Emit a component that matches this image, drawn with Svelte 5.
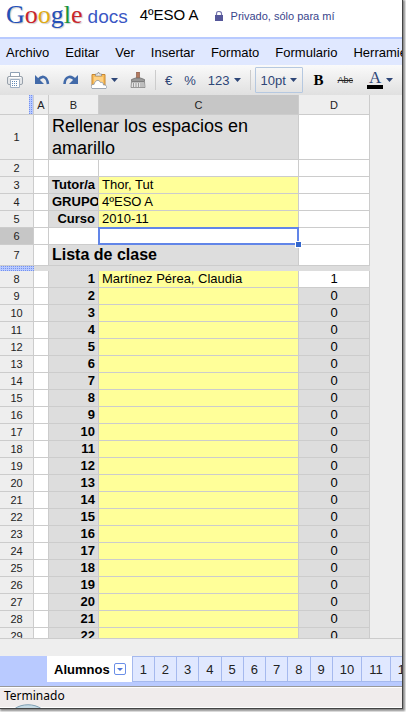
<script>
	const menus = ['Archivo', 'Editar', 'Ver', 'Insertar', 'Formato', 'Formulario', 'Herramientas'];
	const tabs = ['1', '2', '3', '4', '5', '6', '7', '8', '9', '10', '11', '12'];
	const info = [
		{ row: 3, label: 'Tutor/a', value: 'Thor, Tut' },
		{ row: 4, label: 'GRUPO', value: '4ºESO A' },
		{ row: 5, label: 'Curso', value: '2010-11' }
	];
	const students = Array.from({ length: 22 }, (_, i) => ({
		row: i + 8,
		number: i + 1,
		name: i === 0 ? 'Martínez Pérea, Claudia' : '',
		count: i === 0 ? 1 : 0
	}));
	let size = $state('10pt');
</script>

{#snippet arrow()}
	<svg class="arrow" width="7" height="4" viewBox="0 0 7 4" aria-hidden="true"><path d="M0 0h7L3.5 4z" fill="#2e4677" /></svg>
{/snippet}

<div class="frame">
	<div class="window">
		<header>
			<div class="logo">
				<span class="google"><span class="blue">G</span><span class="red">o</span><span class="gold">o</span><span class="blue">g</span><span class="green">l</span><span class="red">e</span></span>
				<span class="docs">docs</span>
			</div>
			<h1>4ºESO A</h1>
			<a class="privacy" href="#share">
				<svg width="8" height="10" viewBox="0 0 8 10" aria-hidden="true">
					<path d="M1.5 5V2.500a2.500 2 0 0 1 5 0V5" fill="none" stroke="#7475ad" stroke-width="1.2" />
					<path d="M0 4h8v6H0z" fill="#55579a" />
				</svg>
				Privado, sólo para mí
			</a>
		</header>

		<nav>
			{#each menus as menu}
				<button>{menu}</button>
			{/each}
		</nav>

		<div class="toolbar">
			<div class="group icons">
				<button aria-label="Imprimir">
					<svg width="16" height="16" viewBox="0 0 16 16">
						<path d="M3.5 5V.5h9V5" fill="#fff" stroke="#8ea0b4" />
						<rect x=".5" y="4.5" width="15" height="8" rx="1.5" fill="#e4e6e9" stroke="#98a1ab" />
						<path d="M2 5.500h12" stroke="#fff" />
						<path d="M3.5 7.5h9v8h-9z" fill="#fff" stroke="#9eafc2" />
						<path d="M5 9.5h6M5 11.5h6M5 13.5h6" stroke="#5f88b5" stroke-dasharray="1 1" />
					</svg>
				</button>
				<button aria-label="Deshacer">
					<svg width="16" height="16" viewBox="0 0 16 16">
						<path d="M3 8C7 3 12 4 13 12" fill="none" stroke="#426aa9" stroke-width="2.6" />
						<path d="M0 3v9h9z" fill="#426aa9" />
					</svg>
				</button>
				<button aria-label="Rehacer">
					<svg width="16" height="16" viewBox="0 0 16 16">
						<path d="M1.5 12C2 4 8 3 12 8" fill="none" stroke="#426aa9" stroke-width="2.6" />
						<path d="M15 3v9H6z" fill="#426aa9" />
					</svg>
				</button>
				<button aria-label="Portapapeles web">
					<svg width="16" height="17" viewBox="0 0 16 17">
						<path d="M1 2.5h13v13H1z" fill="#f8bd5b" stroke="#c68632" />
						<path d="M3 5h9v7H3z" fill="#ffd184" />
						<path d="M4.500 4V2h2l.5-1.500h1L8.500 2h2v2z" fill="#eee" stroke="#888" stroke-width=".7" />
						<path d="M1 16.500C-1 14 1 12 3 12.500 4 8 8 7 9.500 10.500c2-.5 3 .5 3 2.500 3-.5 4 2 2.500 3.500z" fill="#fff" stroke="#8793a5" stroke-width=".8" />
					</svg>
					{@render arrow()}
				</button>
				<button aria-label="Copiar formato">
					<svg width="16" height="16" viewBox="0 0 16 16">
						<path d="M6.500 0h3v7h-3z" fill="#b37a60" stroke="#80503d" stroke-width=".6" />
						<path d="M1.500 7.500l4-1.500h5l4 1.500v2h-13z" fill="#999" stroke="#666" stroke-width=".7" />
						<path d="M1.500 10h13l.5 5.500H1z" fill="#e4e4e4" stroke="#777" stroke-width=".7" />
						<path d="M3.500 11v4M6 11v4M8.500 11v4M11 11v4M13 11v4" stroke="#999" />
					</svg>
				</button>
			</div>
			<div class="group">
				<button>€</button>
				<button>%</button>
				<button>123 {@render arrow()}</button>
			</div>
			<label class="size">
				<select bind:value={size} aria-label="Tamaño de fuente">
					<option>8pt</option>
					<option>10pt</option>
					<option>12pt</option>
				</select>
				{@render arrow()}
			</label>
			<div class="group text-style">
				<button class="bold">B</button>
				<button class="strike">Abc</button>
				<button class="color"><span>A</span>{@render arrow()}</button>
			</div>
		</div>

		<main>
			<table>
				<colgroup>
					<col class="col-row" />
					<col class="col-a" />
					<col class="col-b" />
					<col class="col-c" />
					<col class="col-d" />
				</colgroup>
				<thead>
					<tr>
						<th class="corner"></th>
						<th>A</th>
						<th>B</th>
						<th class="active">C</th>
						<th>D</th>
					</tr>
				</thead>
				<tbody>
					<tr>
						<th>1</th>
						<td></td>
						<td class="grey title" colspan="2">Rellenar los espacios en amarillo</td>
						<td></td>
					</tr>
					<tr>
						<th>2</th>
						<td></td>
						<td></td>
						<td></td>
						<td></td>
					</tr>
					{#each info as item}
						<tr>
							<th>{item.row}</th>
							<td></td>
							<td class="grey label">{item.label}</td>
							<td class="yellow">{item.value}</td>
							<td></td>
						</tr>
					{/each}
					<tr>
						<th class="active">6</th>
						<td></td>
						<td></td>
						<td class="selected"><span class="handle"></span></td>
						<td></td>
					</tr>
					<tr>
						<th>7</th>
						<td></td>
						<td class="grey subtitle" colspan="2">Lista de clase</td>
						<td></td>
					</tr>
					<tr class="freeze">
						<th></th>
						<td colspan="4"></td>
					</tr>
					{#each students as student}
						<tr>
							<th>{student.row}</th>
							<td></td>
							<td class="grey label">{student.number}</td>
							<td class="yellow">{student.name}</td>
							<td class="count" class:grey={student.count === 0}>{student.count}</td>
						</tr>
					{/each}
				</tbody>
			</table>
		</main>
		<div class="scroll-strip"></div>

		<div class="tabs">
			<button class="current">
				Alumnos
				<svg width="12" height="12" viewBox="0 0 12 12" aria-hidden="true">
					<rect x=".5" y=".5" width="11" height="11" rx="1.5" fill="#fff" stroke="#6b8fe8" />
					<path d="M3 5h6L6 8z" fill="#4d74d8" />
				</svg>
			</button>
			{#each tabs as tab}
				<button>{tab}</button>
			{/each}
		</div>

		<footer>
			Terminado
			<svg class="orb" width="28" height="4" viewBox="0 0 28 4" aria-hidden="true">
				<path d="M1 4.500C8 -.5 20 -.5 27 4.500z" fill="#c7dbe5" stroke="#7f9fb3" />
			</svg>
		</footer>
	</div>
</div>

<style>
	:global(body) {
		margin: 0;
		background: #fff;
	}
	.frame {
		box-sizing: border-box;
		height: 100vh;
		padding: 0 3px 3px 0;
		overflow: hidden;
		font-family: "Liberation Sans", Arial, sans-serif;
		font-size: 13px;
		color: #000;
	}
	.window {
		box-sizing: border-box;
		height: 100%;
		display: flex;
		flex-direction: column;
		overflow: hidden;
		background: #eee;
		border-right: 1px solid #444;
		border-bottom: 1px solid #444;
		box-shadow: 1px 1px 2px 1px #888;
	}
	button {
		margin: 0;
		padding: 0;
		border: 0;
		background: none;
		font: inherit;
		color: inherit;
		white-space: nowrap;
	}
	svg {
		display: block;
		flex: none;
	}
	header {
		flex: none;
		display: flex;
		align-items: center;
		height: 37px;
		padding: 0 6px;
		background: #fff;
		white-space: nowrap;
	}
	.logo {
		display: flex;
		align-items: baseline;
		gap: 5px;
		line-height: 30px;
		margin-bottom: 6px;
	}
	.google {
		font-family: "Liberation Serif", "Times New Roman", serif;
		font-size: 26px;
		text-shadow: 1px 1px 1px #ccc;
	}
	.docs {
		font-size: 19px;
		color: #3a57c4;
	}
	.blue { color: #2450b8; }
	.red { color: #c9262c; }
	.gold { color: #e0ab16; }
	.green { color: #16953a; }
	h1 {
		margin: 0 0 8px 12px;
		font-size: 15px;
		font-weight: normal;
	}
	.privacy {
		display: flex;
		align-items: center;
		gap: 8px;
		margin: 0 0 6px 16px;
		font-size: 11px;
		color: #39458c;
		text-decoration: none;
	}
	nav {
		flex: none;
		display: flex;
		gap: 16px;
		height: 26px;
		padding-left: 6px;
		overflow: hidden;
		background: #e0e8ff;
		border-top: 2px solid #b8caff;
	}
	.toolbar {
		flex: none;
		display: flex;
		align-items: center;
		height: 30px;
		overflow: hidden;
		background: linear-gradient(#fafafa, #e0e0e0);
		color: #2e4677;
	}
	.group {
		display: flex;
		align-items: center;
		gap: 12px;
		height: 20px;
		padding: 0 9px;
		border-right: 1px solid #ccc;
	}
	.group button {
		display: flex;
		align-items: center;
		gap: 4px;
	}
	.icons {
		padding-left: 7px;
	}
	.text-style {
		gap: 14px;
		padding: 0 11px;
		border: 0;
	}
	.size {
		position: relative;
		margin-left: 4px;
	}
	.size select {
		appearance: none;
		display: block;
		width: 48px;
		height: 26px;
		padding: 0 0 0 5px;
		border: 1px solid #b5c8e0;
		border-radius: 1px;
		background: transparent;
		font: inherit;
		color: inherit;
	}
	.size :global(.arrow) {
		position: absolute;
		right: 6px;
		top: 11px;
		pointer-events: none;
	}
	.group .bold {
		font-family: "Liberation Serif", "Times New Roman", serif;
		font-size: 15px;
		font-weight: bold;
		color: #000;
	}
	.group .strike {
		font-size: 9px;
		text-decoration: line-through;
		color: #222;
	}
	.group .color {
		gap: 3px;
	}
	.color span {
		width: 16px;
		border-bottom: 4px solid #000;
		font-family: "Liberation Serif", "Times New Roman", serif;
		font-size: 17px;
		line-height: 14px;
	}
	main {
		flex: 1;
		min-height: 0;
		overflow: hidden;
		border-bottom: 1px solid #ccc;
	}
	table {
		table-layout: fixed;
		width: 370px;
		border-collapse: separate;
		border-spacing: 0;
	}
	.col-row { width: 34px; }
	.col-a { width: 15px; }
	.col-b { width: 50px; }
	.col-c { width: 200px; }
	.col-d { width: 71px; }
	th,
	td {
		height: 16px;
		padding: 0;
		border: solid #ccc;
		border-width: 0 1px 1px 0;
		line-height: 16px;
	}
	th {
		background: #eee;
		font-size: 11px;
		font-weight: normal;
		color: #222;
	}
	thead th {
		height: 19px;
	}
	th.active {
		background: #c6c6c6;
	}
	.freeze th {
		background: conic-gradient(#7492ee 25%, #b9caff 0) 0 0 / 2px 2px;
	}
	.corner {
		background: linear-gradient(90deg, #eee 29px, transparent 0), conic-gradient(#7492ee 25%, #b9caff 0) 0 0 / 2px 2px;
	}
	td {
		padding: 0 3px;
		background: #fff;
		white-space: nowrap;
		overflow: hidden;
	}
	.grey {
		background: #ddd;
	}
	.yellow {
		background: #ff9;
	}
	.label {
		font-weight: bold;
		text-align: right;
	}
	.count {
		text-align: center;
	}
	.title {
		height: 44px;
		font-size: 18px;
		line-height: 22px;
		white-space: normal;
	}
	.subtitle {
		height: 20px;
		font-size: 16px;
		font-weight: bold;
	}
	.selected {
		position: relative;
		overflow: visible;
	}
	.selected::after {
		content: "";
		position: absolute;
		inset: -1px;
		border: 2px solid #6185e8;
	}
	.handle {
		position: absolute;
		z-index: 1;
		right: -4px;
		bottom: -4px;
		width: 5px;
		height: 5px;
		border: 1px solid #fff;
		background: #36c;
	}
	.freeze th,
	.freeze td {
		height: 5px;
		border: 0;
		line-height: 0;
	}
	.freeze td {
		background: #ddd;
	}
	.scroll-strip {
		flex: none;
		height: 17px;
	}
	.tabs {
		flex: none;
		display: flex;
		align-items: flex-start;
		height: 30px;
		padding-left: 47px;
		overflow: hidden;
		background: #b9caff;
	}
	.tabs button {
		flex: none;
		box-sizing: border-box;
		height: 26px;
		padding: 0 7px;
		border: solid #a5b9ee;
		border-width: 1px 0 1px 1px;
		background: #e0e8ff;
		color: #222;
	}
	.tabs .current {
		display: flex;
		align-items: center;
		gap: 4px;
		padding: 0 6px;
		border-color: #fff;
		background: #fff;
		font-weight: bold;
		color: #000;
	}
	footer {
		flex: none;
		position: relative;
		height: 21px;
		padding-left: 4px;
		border-top: 1px solid #999;
		background: #f0ecec;
		box-shadow: inset 0 1px #fff, inset 0 -1px #fff;
		font-family: "Noto Sans", sans-serif;
		font-size: 12px;
		line-height: 18px;
	}
	.orb {
		position: absolute;
		left: 14px;
		bottom: 0;
	}
</style>
